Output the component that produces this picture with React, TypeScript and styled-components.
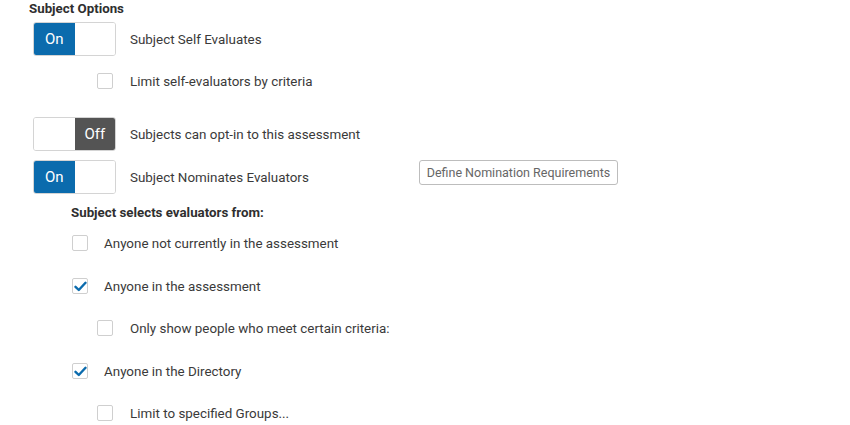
import React from "react";
import styled, { createGlobalStyle } from "styled-components";

const Global = createGlobalStyle`
  body { margin: 0; background: #fff; font-family: Roboto, "Liberation Sans", sans-serif; color: #3a3a3a; }
`;

const Page = styled.div`
  display: flex;
  flex-direction: column;
  padding: 1px 0 0 29px;
  width: 850px;
  height: 425px;
  box-sizing: border-box;
  overflow: hidden;
`;

const Title = styled.div<{ $indent?: number; $mt?: number }>`
  font-weight: 700;
  font-size: 13.3px;
  line-height: 16px;
  color: #2f2f2f;
  margin-left: ${(p) => p.$indent ?? 0}px;
  margin-top: ${(p) => p.$mt ?? 0}px;
`;

const Row = styled.div<{ $indent: number; $mt: number; $h: number }>`
  display: flex;
  align-items: center;
  margin-left: ${(p) => p.$indent}px;
  margin-top: ${(p) => p.$mt}px;
  height: ${(p) => p.$h}px;
`;

const ToggleBox = styled.div`
  display: flex;
  width: 83px;
  height: 34px;
  box-sizing: border-box;
  border: 1px solid #d4d4d4;
  border-radius: 3px;
  overflow: hidden;
  flex-shrink: 0;
`;

const ToggleHalf = styled.div<{ $kind: "on" | "off" | "blank" }>`
  flex: 1;
  display: flex;
  align-items: center;
  justify-content: center;
  color: #fff;
  font-size: 15px;
  font-weight: 400;
  background: ${(p) => (p.$kind === "on" ? "#0b6bad" : p.$kind === "off" ? "#545454" : "#fff")};
`;

const Label = styled.span<{ $gap: number }>`
  margin-left: ${(p) => p.$gap}px;
  font-size: 13.4px;
  color: #3a3a3a;
  white-space: nowrap;
`;

const Box = styled.div`
  width: 16px;
  height: 16px;
  box-sizing: border-box;
  border: 1px solid #cfcfcf;
  border-radius: 2px;
  background: #fff;
  display: flex;
  align-items: center;
  justify-content: center;
  flex-shrink: 0;
`;

const Button = styled.button`
  margin-left: auto;
  margin-right: 232px;
  height: 25px;
  width: 199px;
  padding: 0;
  border: 1px solid #bdbdbd;
  border-radius: 3px;
  background: #fff;
  font-family: Roboto, "Liberation Sans", sans-serif;
  font-size: 12.5px;
  color: #666;
  align-self: flex-start;
`;

function Toggle({ on }: { on: boolean }) {
  return (
    <ToggleBox>
      {on ? (
        <>
          <ToggleHalf $kind="on">On</ToggleHalf>
          <ToggleHalf $kind="blank" />
        </>
      ) : (
        <>
          <ToggleHalf $kind="blank" />
          <ToggleHalf $kind="off">Off</ToggleHalf>
        </>
      )}
    </ToggleBox>
  );
}

function Check({ checked }: { checked?: boolean }) {
  return (
    <Box>
      {checked && (
        <svg width="13" height="11" viewBox="0 0 13 11">
          <path d="M1.5 5.8 L4.8 9 L11.5 1.8" fill="none" stroke="#0b6bad" strokeWidth="2.4" strokeLinecap="round" strokeLinejoin="round" />
        </svg>
      )}
    </Box>
  );
}

export default function App() {
  return (
    <>
      <Global />
      <Page>
        <Title>Subject Options</Title>
        <Row $indent={4} $mt={5} $h={34}>
          <Toggle on />
          <Label $gap={14}>Subject Self Evaluates</Label>
        </Row>
        <Row $indent={68} $mt={17} $h={16}>
          <Check />
          <Label $gap={17}>Limit self-evaluators by criteria</Label>
        </Row>
        <Row $indent={4} $mt={28} $h={34}>
          <Toggle on={false} />
          <Label $gap={14}>Subjects can opt-in to this assessment</Label>
        </Row>
        <Row $indent={4} $mt={9} $h={34}>
          <Toggle on />
          <Label $gap={14}>Subject Nominates Evaluators</Label>
          <Button>Define Nomination Requirements</Button>
        </Row>
        <Title $indent={42} $mt={11}>Subject selects evaluators from:</Title>
        <Row $indent={43} $mt={14} $h={16}>
          <Check />
          <Label $gap={16}>Anyone not currently in the assessment</Label>
        </Row>
        <Row $indent={43} $mt={27} $h={16}>
          <Check checked />
          <Label $gap={16}>Anyone in the assessment</Label>
        </Row>
        <Row $indent={68} $mt={26} $h={16}>
          <Check />
          <Label $gap={17}>Only show people who meet certain criteria:</Label>
        </Row>
        <Row $indent={43} $mt={27} $h={16}>
          <Check checked />
          <Label $gap={16}>Anyone in the Directory</Label>
        </Row>
        <Row $indent={68} $mt={26} $h={16}>
          <Check />
          <Label $gap={17}>Limit to specified Groups...</Label>
        </Row>
      </Page>
    </>
  );
}
